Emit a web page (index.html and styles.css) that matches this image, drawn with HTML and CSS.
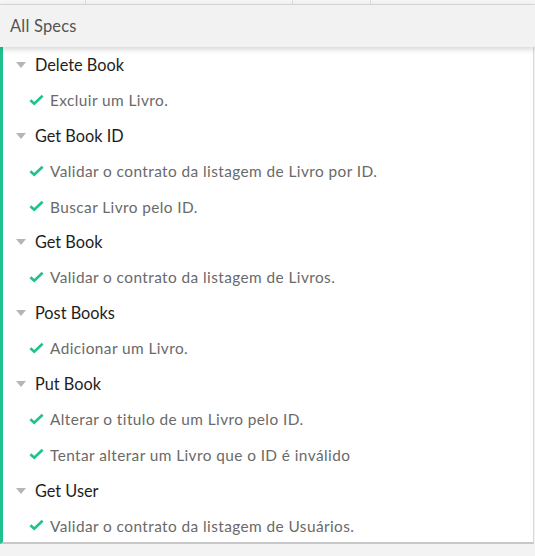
FILE: index.html
```html
<!DOCTYPE html>
<html>
<head>
<meta charset="utf-8">
<link rel="stylesheet" href="styles.css">
</head>
<body>
<div class="topstrip">
  <div class="cell c1"></div>
  <div class="cell c2"></div>
  <div class="cell c3"></div>
  <div class="cell c4"></div>
</div>
<div class="header">All Specs</div>
<div class="content">
  <ul class="list">
    <li class="suite"><span class="caret"></span>Delete Book</li>
    <li class="test"><svg class="check" viewBox="0 0 16 12"><path d="M1.5 6.2 L5.6 10 L14.5 1.5" fill="none" stroke="#1fc28e" stroke-width="2.8"/></svg>Excluir um Livro.</li>
    <li class="suite"><span class="caret"></span>Get Book ID</li>
    <li class="test"><svg class="check" viewBox="0 0 16 12"><path d="M1.5 6.2 L5.6 10 L14.5 1.5" fill="none" stroke="#1fc28e" stroke-width="2.8"/></svg>Validar o contrato da listagem de Livro por ID.</li>
    <li class="test"><svg class="check" viewBox="0 0 16 12"><path d="M1.5 6.2 L5.6 10 L14.5 1.5" fill="none" stroke="#1fc28e" stroke-width="2.8"/></svg>Buscar Livro pelo ID.</li>
    <li class="suite"><span class="caret"></span>Get Book</li>
    <li class="test"><svg class="check" viewBox="0 0 16 12"><path d="M1.5 6.2 L5.6 10 L14.5 1.5" fill="none" stroke="#1fc28e" stroke-width="2.8"/></svg>Validar o contrato da listagem de Livros.</li>
    <li class="suite"><span class="caret"></span>Post Books</li>
    <li class="test"><svg class="check" viewBox="0 0 16 12"><path d="M1.5 6.2 L5.6 10 L14.5 1.5" fill="none" stroke="#1fc28e" stroke-width="2.8"/></svg>Adicionar um Livro.</li>
    <li class="suite"><span class="caret"></span>Put Book</li>
    <li class="test"><svg class="check" viewBox="0 0 16 12"><path d="M1.5 6.2 L5.6 10 L14.5 1.5" fill="none" stroke="#1fc28e" stroke-width="2.8"/></svg>Alterar o titulo de um Livro pelo ID.</li>
    <li class="test"><svg class="check" viewBox="0 0 16 12"><path d="M1.5 6.2 L5.6 10 L14.5 1.5" fill="none" stroke="#1fc28e" stroke-width="2.8"/></svg>Tentar alterar um Livro que o ID é inválido</li>
    <li class="suite"><span class="caret"></span>Get User</li>
    <li class="test"><svg class="check" viewBox="0 0 16 12"><path d="M1.5 6.2 L5.6 10 L14.5 1.5" fill="none" stroke="#1fc28e" stroke-width="2.8"/></svg>Validar o contrato da listagem de Usuários.</li>
  </ul>
</div>
</body>
</html>
```
FILE: styles.css
```css
html, body {
  margin: 0;
  padding: 0;
}
body {
  width: 535px;
  height: 556px;
  background: #f3f3f3;
  font-family: "Lato", "Noto Sans", sans-serif;
  overflow: hidden;
}
.topstrip {
  height: 4px;
  display: flex;
  background: #f5f5f5;
  border-bottom: 1px solid #dcdcdc;
}
.cell {
  height: 4px;
  border-right: 1px solid #dcdcdc;
}
.c1 { width: 85px; }
.c2 { width: 206px; }
.c3 { width: 77px; }
.c4 { flex: 1; border-right: none; }
.header {
  height: 42px;
  line-height: 42px;
  padding-left: 10px;
  background: #f2f2f2;
  color: #555;
  font-size: 16.5px;
  letter-spacing: 0.2px;
  position: relative;
  z-index: 2;
  box-shadow: 0 2px 6px rgba(0, 0, 0, 0.18);
}
.content {
  width: 530px;
  height: 495px;
  background: #fff;
  border-left: 3px solid #1fc28e;
  border-right: 1px solid #d8d8d8;
  border-bottom: 2px solid #c8c8c8;
}
.list {
  list-style: none;
  margin: 0;
  padding: 0;
}
.list li {
  height: 35.46px;
  display: flex;
  align-items: center;
}
.suite {
  font-size: 16.3px;
  color: #1e1e1e;
  padding-left: 13px;
}
.caret {
  width: 0;
  height: 0;
  border-left: 5.5px solid transparent;
  border-right: 5.5px solid transparent;
  border-top: 6px solid #b5b5b5;
  margin-right: 9px;
  margin-top: 1px;
}
.test {
  font-size: 15.4px;
  letter-spacing: 0.42px;
  color: #6a6a6a;
  padding-left: 26px;
}
.check {
  width: 15px;
  height: 12px;
  margin-right: 6px;
  margin-top: -1px;
}
```
